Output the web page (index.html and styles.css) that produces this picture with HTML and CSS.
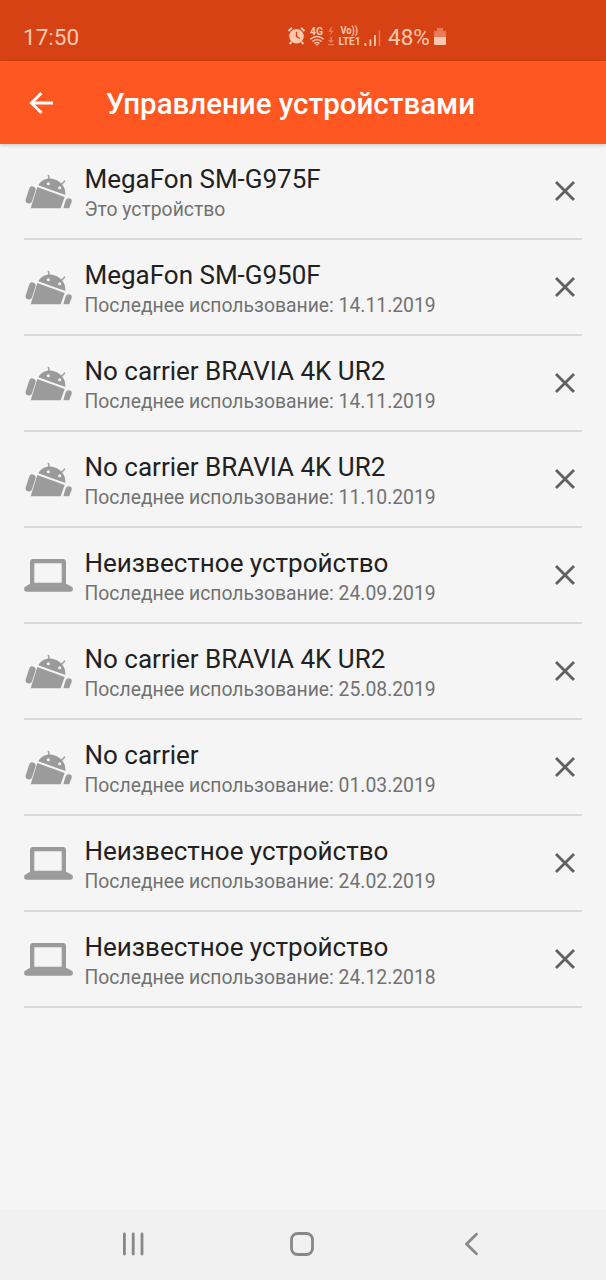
FILE: index.html
```
<!DOCTYPE html>
<html lang="ru">
<head>
<meta charset="utf-8">
<title>Управление устройствами</title>
<link rel="stylesheet" href="styles.css">
</head>
<body>
<svg width="0" height="0" class="defs">
  <symbol id="android" viewBox="0 0 50 42">
    <path d="M13.3 16 40.7 26 36.7 37.3H6.7Z"/>
    <path d="M14.3 14.2C17 8.8 24 6 31 8.4S42 17 41.3 24Z"/>
    <path d="M8.3 18.7 4.9 29.2" class="arm"/>
    <path d="M39.4 37.3C40 34.8 40.8 31.8 41.7 29.6 42.7 27.3 44.8 26.7 46.6 27.8 48.2 28.8 48 30.5 47.3 32.1L45.1 37.3Z"/>
    <path d="M24.3 3.8 25.4 9.3M41 9.8 37.5 13.3" class="antenna"/>
    <circle cx="24.3" cy="12.7" r="1.5" class="eye"/><circle cx="35.7" cy="16.7" r="1.5" class="eye"/>
  </symbol>
  <symbol id="laptop" viewBox="0 0 50 42">
    <path fill-rule="evenodd" d="M9 4H39Q42 4 42 7V28.7L47.5 31.6C49.8 33.2 49.3 36.8 46.3 36.8H2.7C-.3 36.8-.8 33.2 1.5 31.6L6 28.7V7Q6 4 9 4ZM10.3 8.2V27.7H37.7V8.2Z"/>
  </symbol>
  <symbol id="close" viewBox="0 0 22 22"><path d="M2 2 20 20M20 2 2 20"/></symbol>
</svg>
<div class="screen">
  <header class="status">
    <span class="time">17:50</span>
    <svg class="indicators" width="98" height="24" viewBox="0 0 98 24">
      <circle cx="9.5" cy="11.3" r="7.3"/>
      <path class="line" d="M1.5 6 5 2.8M17.5 6 14 2.8M4.4 17 2.6 19M14.6 17 16.4 19"/>
      <path class="hands" d="M9.5 6.8V11.6L13 13.5"/>
      <text x="23" y="9.5" class="tiny" textLength="13" lengthAdjust="spacingAndGlyphs">4G</text>
      <path class="line thin" d="M23.3 14.3Q30 8.8 36.7 14.3M25.3 16.5Q30 12.8 34.7 16.5M27.5 18.5Q30 16.5 32.5 18.5"/>
      <path d="M28.4 19.2H31.6L30 21Z"/>
      <path class="faint" d="M44 2 41.5 7H44L43 11 46.5 5.5H44L45 2ZM43.2 12H45V15H47L44 18.5 41 15H43.2ZM41 19H47V20.3H41Z"/>
      <text x="53.5" y="9.3" class="tiny" textLength="17.5" lengthAdjust="spacingAndGlyphs">Vo))</text>
      <text x="51.5" y="20" class="tiny" textLength="22" lengthAdjust="spacingAndGlyphs">LTE1</text>
      <path d="M77.5 18H79.3V21H77.5ZM82.5 14.5H84.3V21H82.5ZM87 10H88.8V21H87Z"/>
      <path class="faint" d="M91.7 5.5H93.2V21H91.7Z"/>
    </svg>
    <span class="percent">48%</span>
    <svg class="battery" width="12" height="18" viewBox="0 0 12 18">
      <path class="faint" d="M3 0H9V3H12V9H0V3H3Z"/><path d="M0 9H12V16Q12 17 11 17H1Q0 17 0 16Z"/>
    </svg>
  </header>
  <div class="appbar">
    <svg class="back" width="26" height="24" viewBox="0 0 26 24"><path d="M12.5 2 2.5 12 12.5 22M3 12H24"/></svg>
    <h1>Управление устройствами</h1>
  </div>
  <main class="list">
    <div class="row"><svg class="device"><use href="#android"/></svg><div class="info"><div class="name">MegaFon SM-G975F</div><div class="sub">Это устройство</div></div><svg class="close"><use href="#close"/></svg></div>
    <div class="row"><svg class="device"><use href="#android"/></svg><div class="info"><div class="name">MegaFon SM-G950F</div><div class="sub">Последнее использование: 14.11.2019</div></div><svg class="close"><use href="#close"/></svg></div>
    <div class="row"><svg class="device"><use href="#android"/></svg><div class="info"><div class="name">No carrier BRAVIA 4K UR2</div><div class="sub">Последнее использование: 14.11.2019</div></div><svg class="close"><use href="#close"/></svg></div>
    <div class="row"><svg class="device"><use href="#android"/></svg><div class="info"><div class="name">No carrier BRAVIA 4K UR2</div><div class="sub">Последнее использование: 11.10.2019</div></div><svg class="close"><use href="#close"/></svg></div>
    <div class="row"><svg class="device"><use href="#laptop"/></svg><div class="info"><div class="name">Неизвестное устройство</div><div class="sub">Последнее использование: 24.09.2019</div></div><svg class="close"><use href="#close"/></svg></div>
    <div class="row"><svg class="device"><use href="#android"/></svg><div class="info"><div class="name">No carrier BRAVIA 4K UR2</div><div class="sub">Последнее использование: 25.08.2019</div></div><svg class="close"><use href="#close"/></svg></div>
    <div class="row"><svg class="device"><use href="#android"/></svg><div class="info"><div class="name">No carrier</div><div class="sub">Последнее использование: 01.03.2019</div></div><svg class="close"><use href="#close"/></svg></div>
    <div class="row"><svg class="device"><use href="#laptop"/></svg><div class="info"><div class="name">Неизвестное устройство</div><div class="sub">Последнее использование: 24.02.2019</div></div><svg class="close"><use href="#close"/></svg></div>
    <div class="row"><svg class="device"><use href="#laptop"/></svg><div class="info"><div class="name">Неизвестное устройство</div><div class="sub">Последнее использование: 24.12.2018</div></div><svg class="close"><use href="#close"/></svg></div>
  </main>
  <nav class="navbar">
    <svg width="24" height="24" viewBox="0 0 24 24"><path d="M3.4 2V22M12.2 2V22M21 2V22"/></svg>
    <svg width="24" height="24" viewBox="0 0 24 24"><rect x="1.5" y="1.5" width="21" height="21" rx="6"/></svg>
    <svg width="24" height="24" viewBox="0 0 24 24"><path d="M17.5 2.2 7.5 12 17.5 21.8"/></svg>
  </nav>
</div>
</body>
</html>
```

FILE: styles.css
```
* { box-sizing: border-box; }
body { margin: 0; font-family: Roboto, "Noto Sans", sans-serif; background: #f5f5f5; }
.defs { display: block; }
.screen { height: 1280px; display: flex; flex-direction: column; }
.status {
  height: 61px; flex: none; display: flex; align-items: center;
  padding: 12px 24px 0 23px; background: #d74214; color: #ffc9b0; fill: #ffc9b0;
  font-size: 22.5px;
}
.time { width: 264px; }
.indicators { flex: none; }
.tiny { font-size: 10px; font-weight: 700; }
.line { fill: none; stroke: #ffc9b0; stroke-width: 2; }
.thin { stroke-width: 1.4; }
.hands { fill: none; stroke: #d74214; stroke-width: 1.4; }
.faint { opacity: .42; }
.percent { width: 46px; margin-left: 3px; }
.battery { flex: none; }
.appbar {
  height: 83px; flex: none; display: flex; align-items: center; padding: 1px 29px 0;
  background: #ff5722; color: #fff; box-shadow: 0 1px 4px rgba(0, 0, 0, .22);
}
.back { fill: none; stroke: #fff; stroke-width: 3; margin-right: 51px; flex: none; }
h1 { margin: 0; padding-top: 2px; font-size: 29.5px; font-weight: 500; line-height: 36px; white-space: nowrap; }
.list { flex: 1; padding: 0 24px 0 23.5px; }
.row { height: 96px; display: flex; align-items: center; border-bottom: 2px solid #d9d9d9; }
.device { width: 50px; height: 42px; margin-top: 2px; fill: #9b9b9b; flex: none; }
.arm { stroke: #9b9b9b; stroke-width: 6.6; stroke-linecap: round; }
.antenna { stroke: #9b9b9b; stroke-width: 1.5; }
.eye { fill: #f5f5f5; }
.info { flex: 1; margin-left: 11px; padding-top: 5px; white-space: nowrap; }
.name { font-size: 26px; line-height: 31px; color: #212121; }
.sub { font-size: 19.35px; line-height: 29px; color: #727272; }
.close { width: 22px; height: 22px; margin-right: 6px; fill: none; stroke: #606060; stroke-width: 2.8; flex: none; }
.navbar {
  height: 70px; flex: none; display: flex; justify-content: space-between; align-items: center;
  padding: 0 123px 2px 121px; background: #f1f1f1;
}
.navbar svg { fill: none; stroke: #888; stroke-width: 2.8; stroke-linecap: round; stroke-linejoin: round; }
```
